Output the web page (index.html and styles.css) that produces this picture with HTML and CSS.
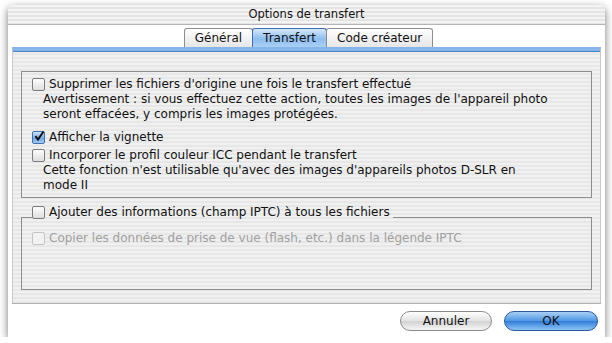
FILE: index.html
```html
<!DOCTYPE html>
<html lang="fr">
<head>
  <meta charset="UTF-8">
  <title>Options de transfert</title>
  <link rel="stylesheet" href="styles.css">
</head>
<body>
  <div class="window">
    <div class="titlebar">Options de transfert</div>

    <!-- onglets -->
    <div class="tabs">
      <div class="tab">Général</div>
      <div class="tab active">Transfert</div>
      <div class="tab">Code créateur</div>
    </div>

    <div class="pane">
      <div class="group">
        <div class="option">
          <span class="box"></span>
          <span>Supprimer les fichiers d'origine une fois le transfert effectué</span>
        </div>
        <p class="note">Avertissement : si vous effectuez cette action, toutes les images de l'appareil photo seront effacées, y compris les images protégées.</p>

        <div class="option first">
          <span class="box checked">
            <svg width="12" height="12" viewBox="0 0 12 12"><path d="M2.5 6.2 L5 9.5 L10.5 1.5" fill="none" stroke="#111" stroke-width="2"/></svg>
          </span>
          <span>Afficher la vignette</span>
        </div>
        <div class="option second">
          <span class="box"></span>
          <span>Incorporer le profil couleur ICC pendant le transfert</span>
        </div>
        <p class="note">Cette fonction n'est utilisable qu'avec des images d'appareils photos D-SLR en mode II</p>
      </div>

      <fieldset class="group iptc">
        <legend class="option">
          <span class="box"></span>
          <span>Ajouter des informations (champ IPTC) à tous les fichiers</span>
        </legend>
        <div class="option disabled">
          <span class="box"></span>
          <span>Copier les données de prise de vue (flash, etc.) dans la légende IPTC</span>
        </div>
      </fieldset>
    </div>

    <div class="footer">
      <button class="button">Annuler</button>
      <button class="button default">OK</button>
    </div>
  </div>
</body>
</html>
```

FILE: styles.css
```css
body {
  margin: 0;
  background: #fff;
  font-family: "DejaVu Sans", Verdana, sans-serif;
  font-size: 12px;
  color: #111;
}
.window {
  margin: 5px 0 0 8px;
  width: 597px;
  height: 332px;
  background: #fff;
  border-radius: 5px 5px 0 0;
  box-shadow: 0 3px 9px rgba(0, 0, 0, 0.55);
  display: flex;
  flex-direction: column;
}
.titlebar {
  height: 19px;
  line-height: 19px;
  text-align: center;
  font-size: 11.5px;
  border-radius: 5px 5px 0 0;
  border-bottom: 1px solid #b5b5b5;
  background: repeating-linear-gradient(#f3f3f3 0 2px, #e4e4e4 2px 4px);
}
.tabs {
  display: flex;
  justify-content: center;
  margin-top: 3px;
  height: 19px;
  padding-left: 4px;
}
.tab {
  padding: 0 10px;
  line-height: 19px;
  border: 1px solid #8e8e8e;
  border-bottom: none;
  border-radius: 3px 3px 0 0;
  background: linear-gradient(#ffffff, #e6e6e6);
}
.tab + .tab {
  margin-left: -1px;
}
.tab.active {
  border-color: #3d6fb3;
  background: linear-gradient(#d6e8fb, #8dbdf0 55%, #a9cff6);
}
.pane {
  box-sizing: border-box;
  margin: 0 4px;
  height: 256px;
  border-top: 4px solid #86b5ea;
  box-shadow: inset 0 1px 0 #4c80c6, 0 1px 0 #b0b0b0;
  border-left: 1px solid #c8c8c8;
  border-right: 1px solid #c8c8c8;
  background: repeating-linear-gradient(#f0f0f0 0 2px, #e7e7e7 2px 4px);
  padding: 20px 8px 0 8px;
}
.group {
  border: 1px solid #8d8d8d;
  padding: 5px 10px 4px;
}
.option {
  display: flex;
  align-items: center;
  gap: 4px;
  height: 14px;
}
.option.first {
  margin-top: 8px;
}
.option.second {
  margin-top: 4px;
}
.note {
  width: 506px;
  margin: 1px 0 0 11px;
  line-height: 15px;
}
.box {
  width: 11px;
  height: 11px;
  border: 1px solid #7c7c7c;
  border-radius: 2px;
  background: linear-gradient(#fdfdfd, #dedede);
  flex: none;
  position: relative;
}
.box svg {
  position: absolute;
  left: 0;
  top: -2px;
}
.box.checked {
  border-color: #3d6fb3;
  background: linear-gradient(#cfe3fa, #6fa7e8 60%, #a7cdf5);
}
.disabled {
  color: #a0a0a0;
}
.disabled .box {
  border-color: #c4c4c4;
  background: #f2f2f2;
}
fieldset.iptc {
  margin: 7px 0 0;
  padding: 2px 10px 44px;
}
.iptc legend {
  padding: 0 3px 10px 0;
  margin-left: 0;
}
.footer {
  display: flex;
  justify-content: flex-end;
  gap: 12px;
  padding: 8px 7px 0 0;
}
.button {
  width: 92px;
  height: 20px;
  border-radius: 10px;
  font-family: inherit;
  font-size: 12px;
  border: 1px solid #8a8a8a;
  background: linear-gradient(#ffffff, #e2e2e2 50%, #d2d2d2 51%, #f5f5f5);
  color: #111;
  padding: 0;
}
.button.default {
  width: 94px;
  border-color: #2a5a9a;
  background: linear-gradient(#a9d0f7, #4d95e3 50%, #2f7cd8 51%, #8ec4f6);
}
```
